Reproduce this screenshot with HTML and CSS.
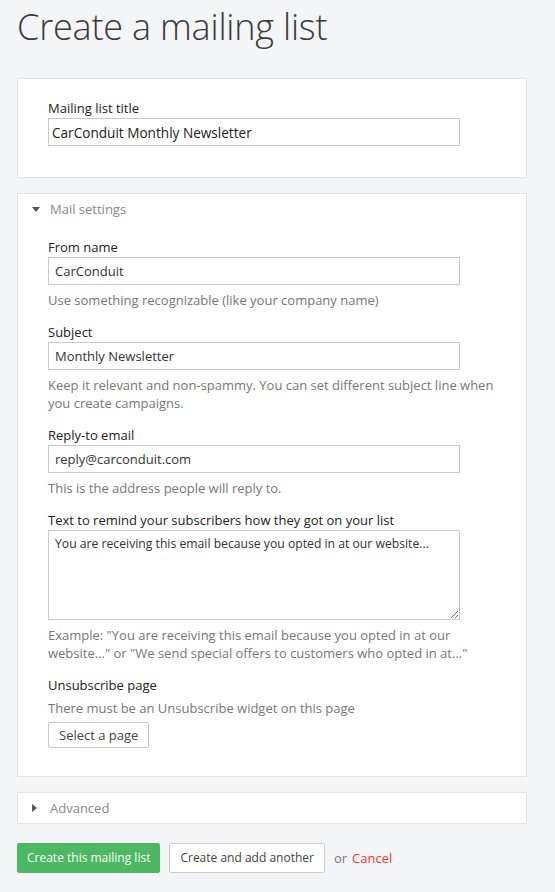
FILE: index.html
```html
<!DOCTYPE html>
<html>
<head>
<meta charset="utf-8">
<link rel="stylesheet" href="styles.css">
</head>
<body>
<div class="page">
  <h1 class="title">Create a mailing list</h1>

  <section class="card card-main">
    <label class="label">Mailing list title</label>
    <input class="input input-title" type="text" value="CarConduit Monthly Newsletter">
  </section>

  <section class="card">
    <div class="card-head"><span class="caret caret-down"></span>Mail settings</div>
    <div class="card-body">
      <div class="field">
        <label class="label">From name</label>
        <input class="input" type="text" value="CarConduit">
        <p class="help">Use something recognizable (like your company name)</p>
      </div>
      <div class="field">
        <label class="label">Subject</label>
        <input class="input" type="text" value="Monthly Newsletter">
        <p class="help">Keep it relevant and non-spammy. You can set different subject line when you create campaigns.</p>
      </div>
      <div class="field">
        <label class="label">Reply-to email</label>
        <input class="input" type="text" value="reply@carconduit.com">
        <p class="help">This is the address people will reply to.</p>
      </div>
      <div class="field">
        <label class="label">Text to remind your subscribers how they got on your list</label>
        <textarea class="input textarea">You are receiving this email because you opted in at our website...</textarea>
        <p class="help">Example: "You are receiving this email because you opted in at our website..." or "We send special offers to customers who opted in at..."</p>
      </div>
      <div class="field field-last">
        <label class="label">Unsubscribe page</label>
        <p class="help help-tight">There must be an Unsubscribe widget on this page</p>
        <button class="btn btn-small" type="button">Select a page</button>
      </div>
    </div>
  </section>

  <section class="card">
    <div class="card-head"><span class="caret caret-right"></span>Advanced</div>
  </section>

  <div class="actions">
    <button class="btn btn-primary" type="button">Create this mailing list</button>
    <button class="btn btn-default" type="button">Create and add another</button>
    <span class="or">or</span>
    <a class="cancel" href="#">Cancel</a>
  </div>
</div>
</body>
</html>
```

FILE: styles.css
```css
html, body {
  margin: 0;
  padding: 0;
  background: #f4f5f7;
}
body {
  font-family: "Open Sans", "Liberation Sans", sans-serif;
  font-size: 13px;
  line-height: 18px;
  color: #333;
}
.page {
  padding: 0 28px 0 17px;
  display: flex;
  flex-direction: column;
}
.title {
  margin: 0;
  padding-top: 4px;
  height: 74px;
  font-size: 36px;
  line-height: 46px;
  font-weight: 300;
  color: #3a3a3a;
  letter-spacing: -0.2px;
}
.card {
  background: #fff;
  border: 1px solid #e2e3e5;
  margin-bottom: 15px;
}
.card-main {
  padding: 20px 30px 31px 30px;
  display: flex;
  flex-direction: column;
}
.card-head {
  display: flex;
  align-items: center;
  height: 30px;
  padding-left: 13px;
  color: #888;
  font-size: 13px;
}
.caret {
  display: inline-block;
  width: 0;
  height: 0;
}
.caret-down {
  border-left: 4px solid transparent;
  border-right: 4px solid transparent;
  border-top: 5px solid #555;
  margin-left: 1px;
  margin-right: 10px;
}
.caret-right {
  border-top: 4px solid transparent;
  border-bottom: 4px solid transparent;
  border-left: 5px solid #555;
  margin-left: 1px;
  margin-right: 13px;
}
.card-body {
  padding: 14px 30px 28px 30px;
  display: flex;
  flex-direction: column;
}
.field {
  display: flex;
  flex-direction: column;
  align-items: flex-start;
  margin-bottom: 14px;
}
.field-last {
  margin-bottom: 0;
}
.label {
  display: block;
  font-size: 13px;
  line-height: 18px;
  color: #222;
  font-weight: 500;
  margin-bottom: 1px;
}
.input {
  box-sizing: border-box;
  width: 412px;
  height: 28px;
  border: 1px solid #c9c9c9;
  border-radius: 0;
  padding: 0 6px;
  font-family: "Open Sans", "Liberation Sans", sans-serif;
  font-size: 13px;
  color: #333;
  background: #fff;
  margin: 0;
}
.input-title {
  font-size: 13.6px;
  padding: 0 3px;
  color: #222;
}
.textarea {
  height: 90px;
  padding: 4px 6px;
  font-size: 12.2px;
  line-height: 18px;
  resize: vertical;
}
.help {
  margin: 6px 0 0 0;
  color: #777;
  font-size: 13px;
  line-height: 18px;
  max-width: 450px;
}
.help-tight {
  margin-top: 4px;
}
.btn {
  font-family: "Open Sans", "Liberation Sans", sans-serif;
  font-size: 12px;
  line-height: 18px;
  border-radius: 2px;
  cursor: pointer;
  margin: 0;
}
.btn-small {
  margin-top: 5px;
  height: 26px;
  padding: 0 10px;
  font-size: 13px;
  background: #fff;
  border: 1px solid #c9c9c9;
  color: #444;
}
.actions {
  display: flex;
  align-items: center;
  margin-top: 4px;
}
.btn-primary {
  height: 30px;
  padding: 0 9px;
  background: #4bb862;
  border: 1px solid #4bb862;
  color: #fff;
}
.btn-default {
  height: 30px;
  padding: 0 10px;
  margin-left: 9px;
  background: #fff;
  border: 1px solid #ccc;
  color: #444;
}
.or {
  margin-left: 9px;
  color: #777;
}
.cancel {
  margin-left: 5px;
  color: #f33;
  text-decoration: none;
}
```
